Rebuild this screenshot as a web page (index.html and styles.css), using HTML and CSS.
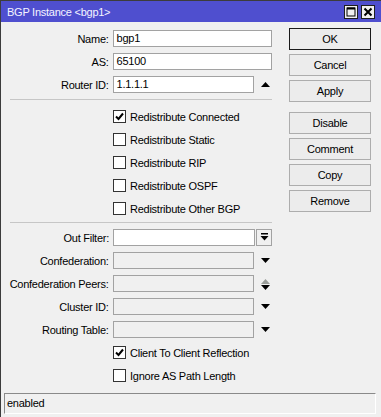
FILE: index.html
```html
<!DOCTYPE html>
<html lang="en">
<head>
    <meta charset="UTF-8">
    <title>BGP Instance &lt;bgp1&gt;</title>
    <link rel="stylesheet" href="styles.css">
</head>
<body>
<div class="window">
    <div class="titlebar">
        <span class="title">BGP Instance &lt;bgp1&gt;</span>
        <div class="title-buttons">
            <span class="tbtn">
                <svg width="10" height="10" viewBox="0 0 10 10"><rect x="1" y="1" width="8" height="8" fill="none" stroke="#000" stroke-width="1"/><line x1="1" y1="1.5" x2="9" y2="1.5" stroke="#000" stroke-width="2"/></svg>
            </span>
            <span class="tbtn">
                <svg width="10" height="10" viewBox="0 0 10 10"><path d="M1.5 1.5 L8.5 8.5 M8.5 1.5 L1.5 8.5" stroke="#000" stroke-width="2"/></svg>
            </span>
        </div>
    </div>

    <div class="content">
        <div class="form">
            <div class="row">
                <label class="label">Name:</label>
                <div class="input">bgp1</div>
            </div>
            <div class="row">
                <label class="label">AS:</label>
                <div class="input">65100</div>
            </div>
            <div class="row">
                <label class="label">Router ID:</label>
                <div class="input short">1.1.1.1</div>
                <span class="arrow"><svg width="9" height="5" viewBox="0 0 9 5"><polygon points="0,5 4.5,0 9,5" fill="#000"/></svg></span>
            </div>

            <div class="separator"></div>

            <div class="check-row"><span class="checkbox checked"><svg width="11" height="11" viewBox="0 0 11 11"><polyline points="2,5.5 4.5,8 9,2.5" fill="none" stroke="#000" stroke-width="2"/></svg></span>Redistribute Connected</div>
            <div class="check-row"><span class="checkbox"></span>Redistribute Static</div>
            <div class="check-row"><span class="checkbox"></span>Redistribute RIP</div>
            <div class="check-row"><span class="checkbox"></span>Redistribute OSPF</div>
            <div class="check-row"><span class="checkbox"></span>Redistribute Other BGP</div>

            <div class="separator lower"></div>

            <div class="row">
                <label class="label">Out Filter:</label>
                <div class="input short"></div>
                <span class="drop-btn"><svg width="9" height="9" viewBox="0 0 9 9"><rect x="1" y="0" width="7" height="1.5" fill="#000"/><polygon points="0.5,3 8.5,3 4.5,7.5" fill="#000"/></svg></span>
            </div>
            <div class="row">
                <label class="label">Confederation:</label>
                <div class="input short disabled"></div>
                <span class="arrow"><svg width="9" height="5" viewBox="0 0 9 5"><polygon points="0,0 9,0 4.5,5" fill="#000"/></svg></span>
            </div>
            <div class="row">
                <label class="label">Confederation Peers:</label>
                <div class="input short disabled"></div>
                <span class="arrow updown">
                    <svg width="9" height="5" viewBox="0 0 9 5"><polygon points="0,5 4.5,0 9,5" fill="#9a9e9a"/></svg>
                    <svg width="9" height="5" viewBox="0 0 9 5"><polygon points="0,0 9,0 4.5,5" fill="#000"/></svg>
                </span>
            </div>
            <div class="row">
                <label class="label">Cluster ID:</label>
                <div class="input short disabled"></div>
                <span class="arrow"><svg width="9" height="5" viewBox="0 0 9 5"><polygon points="0,0 9,0 4.5,5" fill="#000"/></svg></span>
            </div>
            <div class="row">
                <label class="label">Routing Table:</label>
                <div class="input short disabled"></div>
                <span class="arrow"><svg width="9" height="5" viewBox="0 0 9 5"><polygon points="0,0 9,0 4.5,5" fill="#000"/></svg></span>
            </div>

            <div class="check-row first-after"><span class="checkbox checked"><svg width="11" height="11" viewBox="0 0 11 11"><polyline points="2,5.5 4.5,8 9,2.5" fill="none" stroke="#000" stroke-width="2"/></svg></span>Client To Client Reflection</div>
            <div class="check-row"><span class="checkbox"></span>Ignore AS Path Length</div>
        </div>

        <div class="actions">
            <button class="default">OK</button>
            <button>Cancel</button>
            <button>Apply</button>
            <button class="group">Disable</button>
            <button>Comment</button>
            <button>Copy</button>
            <button>Remove</button>
        </div>
    </div>

    <div class="statusbar">enabled</div>
</div>
</body>
</html>
```

FILE: styles.css
```css
body {
    margin: 0;
    font-family: "Liberation Sans", Arial, sans-serif;
    font-size: 11px;
    letter-spacing: -0.25px;
    color: #000;
    background-color: #f0f0f0;
}

.window {
    width: 381px;
    height: 417px;
    box-sizing: border-box;
    border-left: 1px solid #3c3c3c;
    border-top: 1px solid #3c3c3c;
    display: flex;
    flex-direction: column;
    background-color: #f0f0f0;
}

.titlebar {
    height: 21px;
    background-color: #4f4fcf;
    display: flex;
    align-items: center;
    justify-content: space-between;
    padding-left: 6px;
}

.title {
    color: #f4f4ff;
    font-size: 11px;
}

.title-buttons {
    display: flex;
    gap: 3px;
    padding-right: 6px;
    margin-top: 1px;
}

.tbtn {
    width: 14px;
    height: 14px;
    box-sizing: border-box;
    border: 1px solid #1e1e1e;
    background-color: #f0f0f0;
    display: flex;
    align-items: center;
    justify-content: center;
}

.content {
    flex: 1;
    display: flex;
    padding-top: 6px;
}

.form {
    width: 271px;
    padding-top: 2px;
}

.row {
    display: flex;
    align-items: center;
    height: 17px;
    margin-bottom: 6px;
}

.label {
    width: 108px;
    text-align: right;
    margin-right: 4px;
    white-space: nowrap;
}

.input {
    width: 160px;
    height: 17px;
    box-sizing: border-box;
    border: 1px solid #a2a2a2;
    background-color: #fff;
    padding: 0 3px;
    line-height: 15px;
    color: #000;
}

.input.short {
    width: 142px;
}

.input.disabled {
    background-color: #f0f0f0;
}

.arrow {
    width: 18px;
    display: flex;
    flex-direction: column;
    align-items: flex-start;
    padding-left: 7px;
    box-sizing: border-box;
}

.arrow.updown {
    gap: 1px;
    margin-top: 1px;
}

.arrow svg {
    display: block;
}

.drop-btn {
    width: 16px;
    height: 17px;
    margin-left: 1px;
    box-sizing: border-box;
    border: 1px solid #a2a2a2;
    background-color: #f0f0f0;
    display: flex;
    align-items: center;
    justify-content: center;
}

.separator {
    margin: 1px 0 8px 9px;
    width: 262px;
    height: 1px;
    background-color: #c6c6c6;
}

.separator.lower {
    margin-top: -1px;
    margin-bottom: 6px;
}

.check-row {
    display: flex;
    align-items: center;
    height: 17px;
    margin-bottom: 6px;
    padding-left: 112px;
    white-space: nowrap;
}

.check-row.first-after {
    margin-top: 2px;
}

.checkbox {
    width: 13px;
    height: 13px;
    box-sizing: border-box;
    border: 1px solid #333;
    background-color: #fff;
    margin-right: 4px;
    display: flex;
    align-items: center;
    justify-content: center;
}

.actions {
    display: flex;
    flex-direction: column;
    gap: 4px;
    margin-left: 17px;
}

button {
    width: 82px;
    height: 22px;
    border: 1px solid #adadad;
    background-color: #ececec;
    font-family: inherit;
    font-size: 11px;
    letter-spacing: -0.25px;
    color: #000;
    padding: 0;
}

button.default {
    border-color: #1a1a1a;
}

button.group {
    margin-top: 6px;
}

.statusbar {
    margin: 0 5px 3px 3px;
    height: 21px;
    box-sizing: border-box;
    border-top: 1px solid #8a8a8a;
    border-left: 1px solid #8a8a8a;
    border-right: 1px solid #fff;
    border-bottom: 1px solid #fff;
    padding-left: 2px;
    line-height: 18px;
}
```
